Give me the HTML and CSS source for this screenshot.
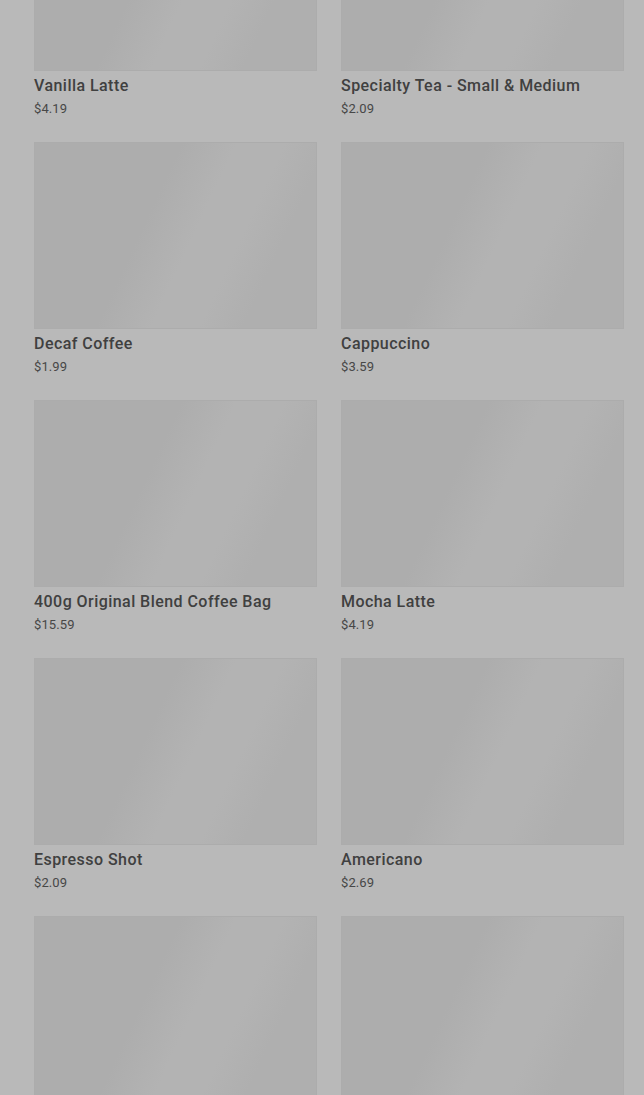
FILE: index.html
```html
<!DOCTYPE html>
<html lang="en">
<head>
<meta charset="utf-8">
<title>Menu</title>
<link rel="stylesheet" href="styles.css">
</head>
<body>
<main class="grid">
  <article class="card"><div class="thumb"></div><h3 class="name">Vanilla Latte</h3><p class="price">$4.19</p></article>
  <article class="card"><div class="thumb"></div><h3 class="name">Specialty Tea - Small &amp; Medium</h3><p class="price">$2.09</p></article>
  <article class="card"><div class="thumb"></div><h3 class="name">Decaf Coffee</h3><p class="price">$1.99</p></article>
  <article class="card"><div class="thumb"></div><h3 class="name">Cappuccino</h3><p class="price">$3.59</p></article>
  <article class="card"><div class="thumb"></div><h3 class="name">400g Original Blend Coffee Bag</h3><p class="price">$15.59</p></article>
  <article class="card"><div class="thumb"></div><h3 class="name">Mocha Latte</h3><p class="price">$4.19</p></article>
  <article class="card"><div class="thumb"></div><h3 class="name">Espresso Shot</h3><p class="price">$2.09</p></article>
  <article class="card"><div class="thumb"></div><h3 class="name">Americano</h3><p class="price">$2.69</p></article>
  <article class="card"><div class="thumb"></div><h3 class="name">&nbsp;</h3><p class="price">&nbsp;</p></article>
  <article class="card"><div class="thumb"></div><h3 class="name">&nbsp;</h3><p class="price">&nbsp;</p></article>
</main>
</body>
</html>
```

FILE: styles.css
```css
html, body {
  margin: 0;
  padding: 0;
  background: #b9b9b9;
  overflow: hidden;
  height: 1095px;
}
body {
  font-family: Roboto, "Liberation Sans", sans-serif;
  color: #3a3a3a;
}
.grid {
  display: grid;
  grid-template-columns: 283px 283px;
  column-gap: 24px;
  row-gap: 23px;
  padding: 0 20px 0 34px;
  margin-top: -116px;
}
.card {
  display: flex;
  flex-direction: column;
}
.thumb {
  height: 185px;
  border: 1px solid #acacac;
  background: linear-gradient(115deg, #adadad 0%, #adadad 40%, #b3b3b3 55%, #b3b3b3 68%, #afafaf 80%, #afafaf 100%);
}
.name {
  margin: 5px 0 0;
  font-size: 16px;
  line-height: 20px;
  font-weight: 500;
  letter-spacing: 0.45px;
  color: #404040;
}
.price {
  margin: 3px 0 0;
  font-size: 13px;
  line-height: 20px;
  letter-spacing: 0.1px;
  color: #474747;
}
```
